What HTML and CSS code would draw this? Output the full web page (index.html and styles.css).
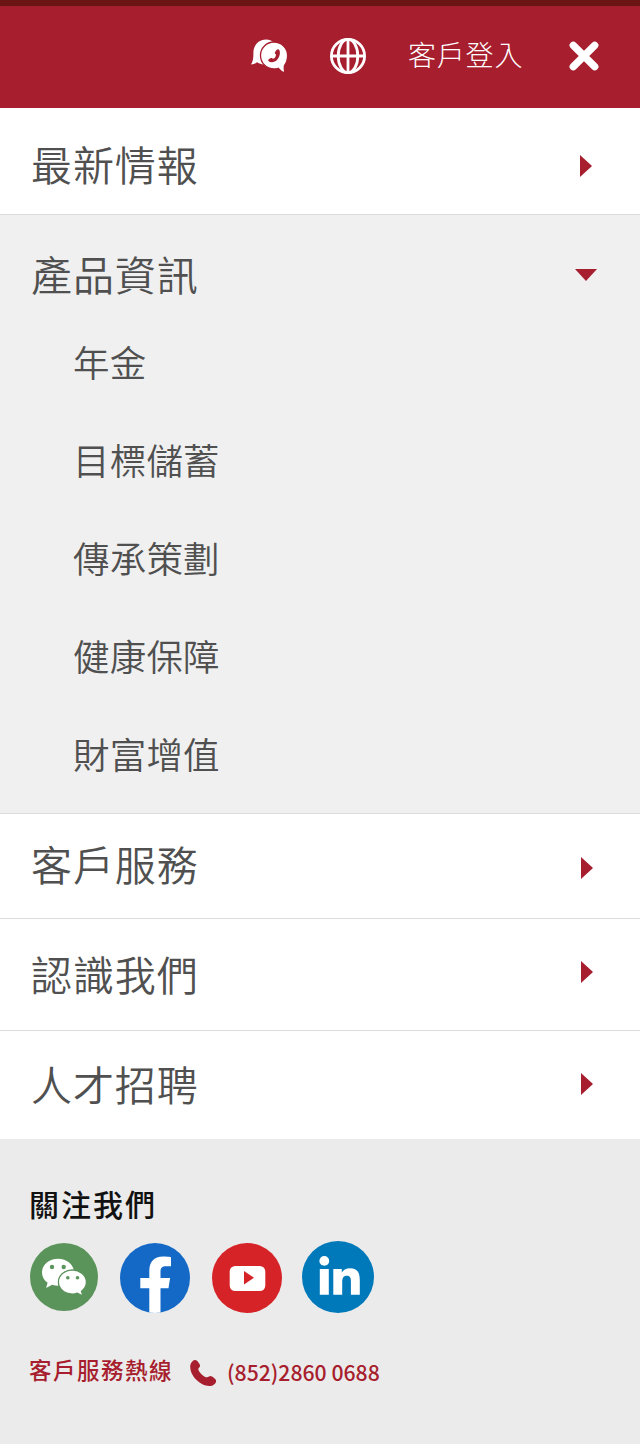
FILE: index.html
```html
<!DOCTYPE html>
<html lang="zh-Hant">
<head>
  <meta charset="UTF-8">
  <meta name="viewport" content="width=device-width, initial-scale=1">
  <title>產品資訊</title>
  <link rel="stylesheet" href="styles.css">
</head>
<body>
  <header class="topbar">
    <a href="#" class="icon-chat" aria-label="聯絡我們">
      <svg width="38" height="36" viewBox="0 0 38 36">
        <path fill="#fff" d="M15 .5C7.500.5 2.400 6.500 2.400 13.500c0 6-.4 8.500-2.400 12 2.500-.2 4.500-1 6-2.300 2.500 1.500 5 2.300 9 2.300 7 0 12-6 12-12.500S22 .5 15 .5z"/>
        <path fill="#fff" stroke="#a71e2e" stroke-width="1.300" d="M23 3c-7.500 0-13.500 6-13.500 13.400S15.500 30 23 30c1.500 0 3-.2 4.400-.7 1.700 2.300 4 4 6.500 4.500-.7-2.300-.8-5-.5-7.100 2-2.500 3.200-6 3.200-10.100C36.600 9 30.500 3 23 3z"/>
        <path fill="#a71e2e" d="M27 10.200c1.100 0 2 1.500 1.900 3.700-.2 5-4 9.600-8.600 9.300-1.700-.1-3.200-1-3.100-1.900.1-.8 2.400-2.300 3.200-2.200.8 0 1.100.9 1.800.7 1.600-.5 2.800-2.500 2.800-4 0-.6-1.100-.8-1.200-1.500 0-1 1.700-4.100 3.200-4.100z"/>
      </svg>
    </a>
    <a href="#" class="icon-globe" aria-label="語言">
      <svg width="36" height="36" viewBox="0 0 36 36" fill="none" stroke="#fff" stroke-width="2.800">
        <circle cx="18" cy="18" r="16.600"/>
        <ellipse cx="18" cy="18" rx="9.800" ry="16.600"/>
        <path d="M18 1v34M1 18h34"/>
      </svg>
    </a>
    <a href="#" class="login">客戶登入</a>
    <a href="#" class="icon-close" aria-label="關閉">
      <svg width="30" height="30" viewBox="0 0 30 30" stroke="#fff" stroke-width="7.400" stroke-linecap="round">
        <path d="M4.300 4.300l21.400 21.400M25.700 4.300L4.300 25.700"/>
      </svg>
    </a>
  </header>

  <nav class="menu">
    <div class="menu-item news">
      <a href="#">最新情報</a>
      <span class="arrow"></span>
    </div>
    <div class="menu-group">
      <div class="menu-item products">
        <a href="#">產品資訊</a>
        <span class="arrow down"></span>
      </div>
      <ul class="submenu">
        <li><a href="#">年金</a></li>
        <li><a href="#">目標儲蓄</a></li>
        <li><a href="#">傳承策劃</a></li>
        <li><a href="#">健康保障</a></li>
        <li><a href="#">財富增值</a></li>
      </ul>
    </div>
    <div class="menu-item service">
      <a href="#">客戶服務</a>
      <span class="arrow"></span>
    </div>
    <div class="menu-item about">
      <a href="#">認識我們</a>
      <span class="arrow"></span>
    </div>
    <div class="menu-item careers">
      <a href="#">人才招聘</a>
      <span class="arrow"></span>
    </div>
  </nav>

  <footer class="footer">
    <h2>關注我們</h2>
    <div class="social">
      <a href="#" class="wechat" aria-label="WeChat">
        <svg width="68" height="68" viewBox="0 0 68 68">
          <circle cx="34" cy="34" r="34" fill="#5b945b"/>
          <path fill="#fff" d="M28 15.700c-8.800 0-16 6-16 13.700 0 4.300 2 7.700 5.600 10.300l-1.500 5.300 6-3.200c2 .6 3.900.9 5.900.9 8.800 0 16-5.700 16-13.300S36.800 15.700 28 15.700z"/>
          <path fill="#fff" stroke="#5b945b" stroke-width="1.300" d="M42.200 27c-7.700 0-13.800 5.400-13.800 12.100s6.100 12 13.800 12c1.800 0 3.500-.3 5.100-.9l5.600 2.800-1.400-4.700c3-2.200 4.900-5.600 4.900-9.200C56.400 32.400 49.900 27 42.200 27z"/>
          <g fill="#5b945b">
            <circle cx="22" cy="24" r="2.200"/>
            <circle cx="33.700" cy="24" r="2.200"/>
            <circle cx="37.800" cy="34.800" r="1.800"/>
            <circle cx="47.500" cy="34.800" r="1.800"/>
          </g>
        </svg>
      </a>
      <a href="#" class="facebook" aria-label="Facebook">
        <svg width="70" height="70" viewBox="0 0 70 70">
          <circle cx="35" cy="35" r="35" fill="#1469c7"/>
          <path fill="#fff" d="M29.300 69.600V45.300h-9V35h9v-6.500c0-9.500 4.300-14.900 14-14.900 3 0 5.200.2 7.700.6v9h-4.700c-4.600 0-5.800 2-5.800 5.500V35h9.600l-1.600 10.300h-8v24.300q-5.600.8-11.200 0z"/>
        </svg>
      </a>
      <a href="#" class="youtube" aria-label="YouTube">
        <svg width="70" height="70" viewBox="0 0 70 70">
          <circle cx="35" cy="35" r="35" fill="#d62328"/>
          <rect x="17.700" y="23" width="35.600" height="25" rx="5.500" fill="#fff"/>
          <path fill="#d62328" d="M32 28v13.400l10-6.700z"/>
        </svg>
      </a>
      <a href="#" class="linkedin" aria-label="LinkedIn">
        <svg width="72" height="72" viewBox="0 0 72 72">
          <circle cx="36" cy="36" r="36" fill="#0079ba"/>
          <g fill="#fff">
            <circle cx="22.300" cy="19.900" r="4.900"/>
            <path d="M17.800 28h9v25.700h-9zM31.300 28h8.500v3.500c1.500-2.700 4.400-4.300 8.100-4.300 7.600 0 9.900 4.400 9.900 12v14.500h-8.900V40.600c0-3.300-.5-5.900-4-5.900-3.700 0-4.700 2.600-4.700 6.200v12.800h-8.900z"/>
          </g>
        </svg>
      </a>
    </div>
    <div class="hotline">
      <span class="hotline-label">客戶服務熱線</span>
      <svg width="27" height="27" viewBox="0 0 27 27">
        <path fill="#a71e2e" d="M4.700.1C5.900-.2 7.100.7 8.300 2.300c1.100 1.400 2 3 1.700 3.900-.3 1.200-1.700 1.500-1.700 3.100 0 1.800 4.100 6.900 7.800 8 1.800.5 3-1.300 4.400-1.200 1.300.1 5.700 3.200 5.600 4.800-.1 2.700-3.300 5.200-6.900 5.100C10.400 25.800.2 16.400.2 6.600.2 3.500 2.500.7 4.700.1z"/>
      </svg>
      <a href="tel:28600688">(852)2860 0688</a>
    </div>
  </footer>
</body>
</html>
```
FILE: styles.css
```css
* {
  box-sizing: border-box;
}
body {
  margin: 0;
  background: #fff;
  color: #505050;
  font-family: "Noto Sans CJK TC", sans-serif;
  font-weight: 350;
}
a {
  color: inherit;
  text-decoration: none;
}
svg {
  display: block;
}

/* Top bar */
.topbar {
  display: flex;
  align-items: center;
  height: 108px;
  padding: 0 41px 3px 251px;
  background: #a71e2e;
  border-top: 6px solid #6b1414;
}
.icon-chat {
  padding-top: 2px;
}
.icon-globe {
  margin-left: 41px;
}
.login {
  margin-left: 42px;
  padding-bottom: 3px;
  color: #fff;
  font-size: 28px;
  font-weight: 300;
  letter-spacing: 0.8px;
  line-height: 40px;
}
.icon-close {
  margin-left: auto;
}

/* Menu */
.menu-item {
  display: flex;
  align-items: flex-start;
  justify-content: space-between;
  padding: 0 46px 0 31px;
  border-bottom: 1px solid #dcdcdc;
}
.menu-item a {
  font-size: 41px;
  letter-spacing: 0.9px;
  line-height: 60px;
}
.news {
  height: 107px;
  padding-top: 25px;
  padding-right: 47px;
}
.service {
  height: 105px;
  padding-top: 19px;
}
.about {
  height: 112px;
  padding-top: 24px;
}
.careers {
  height: 108px;
  padding-top: 22px;
  border-bottom: none;
}
.arrow {
  margin: 22px 1px 0 0;
  border-left: 12px solid #a71e2e;
  border-top: 11px solid transparent;
  border-bottom: 11px solid transparent;
}
.service .arrow {
  margin-top: 24px;
}
.about .arrow {
  margin-top: 18px;
}
.careers .arrow {
  margin-top: 20px;
}
.arrow.down {
  margin-top: 26px;
  border-top: 12px solid #a71e2e;
  border-left: 11px solid transparent;
  border-right: 11px solid transparent;
  border-bottom: none;
}
.menu-group {
  height: 599px;
  background: #f0f0f0;
  border-bottom: 1px solid #dcdcdc;
}
.products {
  padding-top: 28px;
  padding-right: 42px;
  border-bottom: none;
}
.submenu {
  margin: 0;
  padding: 10px 0 0 73px;
  list-style: none;
}
.submenu li {
  height: 98px;
  font-size: 36.5px;
  letter-spacing: 0.2px;
  line-height: 98px;
}

/* Footer */
.footer {
  height: 305px;
  padding: 42px 29px 0;
  background: #ebebeb;
}
.footer h2 {
  margin: 0;
  color: #111;
  font-size: 30px;
  font-weight: 500;
  letter-spacing: 2px;
  line-height: 44px;
}
.social {
  display: flex;
  align-items: center;
  height: 72px;
  margin-top: 16px;
  padding-left: 1px;
}
.facebook,
.youtube {
  margin: 2px 0 0 22px;
}
.linkedin {
  margin-left: 20px;
}
.hotline {
  display: flex;
  align-items: center;
  height: 36px;
  margin-top: 40px;
  color: #a71e2e;
  font-size: 21.2px;
  font-weight: 500;
}
.hotline-label {
  padding-bottom: 4px;
  font-size: 22.5px;
  letter-spacing: 1.5px;
}
.hotline svg {
  margin: 4px 10px 0 17px;
}
```
